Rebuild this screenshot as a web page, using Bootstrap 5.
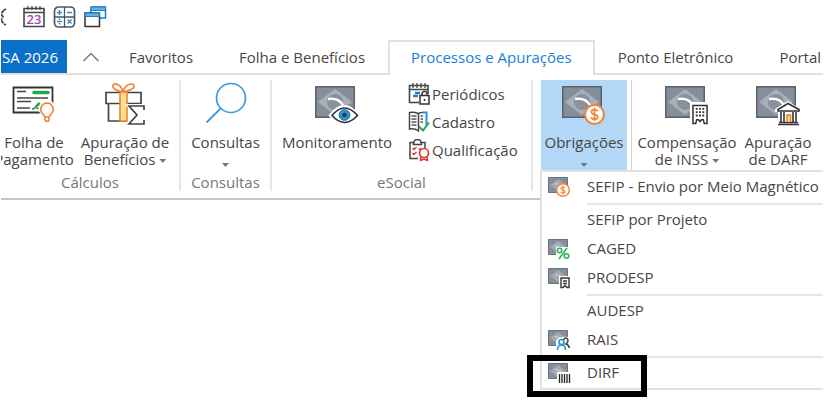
<!DOCTYPE html>
<html lang="pt-BR">
<head>
<meta charset="utf-8">
<meta name="viewport" content="width=device-width, initial-scale=1">
<title>Processos e Apurações</title>
<link href="https://cdn.jsdelivr.net/npm/bootstrap@5.3.0/dist/css/bootstrap.min.css" rel="stylesheet">
<style>
body{font-family:"Open Sans","Noto Sans",sans-serif;font-size:15px;line-height:17px;color:#484644;background:#fff}
.app-frame{margin:0 8px 0 1px;overflow:hidden;white-space:nowrap}
.app-frame button{color:inherit;font-size:15px;line-height:17px;border-radius:0;border:0;padding:0}
.quick-bar{height:40px;padding:6px 0 0;gap:8px}
.quick-bar svg,.tile svg,.mini svg,.menu-row svg{display:block;flex:none}
.ribbon-tabs{border-bottom:2px solid #e1e1e1;height:35px}
.ribbon-tabs > *{flex:none}
.ribbon-tabs .nav-link{border:2px solid transparent;border-bottom:0;border-radius:0;padding:7px 21px 0;height:35px;margin:0;color:#484644}
.ribbon-tabs .nav-link.active{color:#1a7fd6;border-color:#e1e1e1;background:#fff}
.app-frame .file-tab{width:66px;height:33px;background:#0a70c8;color:#fff;padding:2px 9px 0 0}
.app-frame .fold-btn{width:39px;padding:0 0 2px 15px}
.ribbon{height:125px;border-bottom:2px solid #c6c6c6;padding-top:5px}
.ribbon-group{height:111px;border-right:2px solid #e6e6e6}
.group-name{color:#777;margin-top:4px;text-align:center}
.tiles{height:90px}
.tile{height:90px;background:none;flex:none}
.tile .pic{height:54px;padding-top:2px}
.w-folha{width:66px}.w-benef{width:100px}.w-cons{width:89px}.w-mon{width:130px}.w-obr{width:86px}.w-comp{width:102px}.w-darf{width:80px}
.g-calc{width:180px}.g-cons{width:91px}.g-esoc{width:261px}
.tile.opened{background:#b3d7f7}
.arrow{width:7px;height:4px;background:#777;clip-path:polygon(0 0,100% 0,50% 100%);display:inline-block;vertical-align:middle}
.arrow.below{display:block;margin:12px auto 0}
.minis{padding-left:6px}
.app-frame .mini{height:28px;background:none;gap:2px}
.drop-panel{position:absolute;left:539px;right:0;top:95px;background:#fff;border:2px solid #e1e1e1;border-width:2px 0 2px 2px;padding-bottom:1px;z-index:2}
.app-frame .menu-row{height:29px;padding-left:6px;background:none;gap:15px}
.menu-row .slot{width:24px;flex:none}
.rule{height:4px;margin-left:45px;border-bottom:2px solid #e6e6e6}
.focus-box{position:absolute;left:-15px;top:-3px;width:120px;height:42px;border:6px solid #000;pointer-events:none}
</style>
<script src="https://cdn.jsdelivr.net/npm/bootstrap@5.3.0/dist/js/bootstrap.bundle.min.js"></script>
</head>
<body>
<svg width="0" height="0" class="position-absolute" aria-hidden="true">
<defs>
<symbol id="flag" viewBox="0 0 40 32"><path d="M.75.75h38.5v30.5H.75z" fill="#858e9b" stroke="#59616c" stroke-width="1.500"/><path d="M3 16 20 3l17 13-17 13z" fill="#a9afb8"/><circle cx="20" cy="16" r="8" fill="#89919d"/><path d="M13 13c6-1 12 1 15 6" fill="none" stroke="#fff" stroke-width="2.400"/></symbol>
<symbol id="flag-small" viewBox="0 0 20 16"><path d="M.5.5h19v15H.5z" fill="#858e9b" stroke="#6a727d"/><path d="m2 8 8-6 8 6-8 6z" fill="#a3aab4"/><path d="M7 7q4-1 6 2" fill="none" stroke="#d4d8dd" stroke-width="1.200"/></symbol>
<symbol id="coin" viewBox="0 0 20 20"><circle cx="10" cy="10" r="9" fill="#fff" stroke="#ef8535" stroke-width="2"/><path d="M13 7c-.5-1.300-1.600-1.700-3-1.700-1.700 0-3 .8-3 2.200 0 3.200 6 1.600 6 4.800 0 1.500-1.300 2.300-3 2.300-1.600 0-2.700-.6-3.200-2M10 3.500v13" fill="none" stroke="#ef8535" stroke-width="1.600"/></symbol>
<symbol id="block" viewBox="0 0 17 21"><path d="M1 1h15v19h-3l-1-4h-2l-1.500 2L7 16H5l-1 4H1z" fill="#fff" stroke="#333" stroke-width="1.600"/><path d="M4 4.500h10M4 8h10M4 11.500h10" stroke="#333" stroke-width="2" stroke-dasharray="2 1.500"/></symbol>
</defs>
</svg>
<div class="app-frame min-vh-100">
  <div class="quick-bar d-flex align-items-start">
    <button class="btn" aria-label="Configurações"><svg width="14" height="22" viewBox="0 0 14 22" fill="none" stroke="#444" stroke-width="1.800"><path d="M5 3 3 4M3 4 0 8M0 8l2 3-2 3M0 14l3 4M3 18l2 1" stroke-dasharray="4 1"/></svg></button>
    <button class="btn" aria-label="Calendário"><svg width="22" height="22" viewBox="0 0 22 22"><path d="M1 2.500h20v18H1zM1 6.500h20" fill="none" stroke="#444" stroke-width="1.600"/><path d="M5 0v4M9 0v4M13 0v4M17 0v4" stroke="#444" stroke-width="1.200"/><text x="11" y="18" text-anchor="middle" font-size="13" font-weight="600" fill="#a347ac">23</text></svg></button>
    <button class="btn" aria-label="Calculadora"><svg width="23" height="22" viewBox="0 0 23 22" fill="none"><rect x="1.500" y="1" width="20" height="20" rx="4" stroke="#555" stroke-width="1.700"/><path d="M11.500 1v20M1.500 11h20" stroke="#555" stroke-width="1.300"/><path d="M4 6.500h5M6.500 4v5M14 6.500h5M4 15.500h5M6.500 12.600v1.500M6.500 17v1.500M14.500 13.500l4 4M18.500 13.500l-4 4" stroke="#2090d8" stroke-width="1.500"/></svg></button>
    <button class="btn" aria-label="Janelas"><svg width="23" height="22" viewBox="0 0 23 22"><path d="M7 1h14.500v11H7z" fill="#fff" stroke="#177fc7" stroke-width="1.500"/><path d="M7 1h14.500v3.500H7z" fill="#64b1e4" stroke="#177fc7"/><path d="M1 7h14.500v13.500H1z" fill="#fff" stroke="#333" stroke-width="1.500"/><path d="M1 7h14.500v3.500H1z" fill="#64b1e4" stroke="#177fc7"/></svg></button>
  </div>
  <nav class="nav nav-tabs flex-nowrap ribbon-tabs" aria-label="Guias">
    <button class="btn file-tab d-flex justify-content-end align-items-center">SA 2026</button>
    <button class="btn fold-btn text-start" aria-label="Recolher"><svg width="18" height="10" viewBox="0 0 18 10"><path d="M1.500 9 9 1.500 16.500 9" fill="none" stroke="#777d88" stroke-width="1.500"/></svg></button>
    <a class="nav-link" href="#">Favoritos</a>
    <a class="nav-link" href="#">Folha e Benefícios</a>
    <a class="nav-link active" aria-current="page" href="#">Processos e Apurações</a>
    <a class="nav-link" href="#">Ponto Eletrônico</a>
    <a class="nav-link" href="#">Portal</a>
  </nav>
  <div class="position-relative">
  <div class="ribbon d-flex">
    <section class="ribbon-group g-calc flex-shrink-0">
      <div class="tiles d-flex gap-2">
        <button class="btn tile w-folha d-flex flex-column align-items-center"><span class="pic"><svg width="44" height="42" viewBox="0 0 44 42" fill="none"><path d="M1.500 5.500h39v25h-39z" stroke="#333" stroke-width="1.800"/><path d="M5 9.500h9M5 16h31M5 19.500h14M5 26h13" stroke="#444" stroke-width="1.500"/><path d="M22 10.500h14" stroke="#25a64a" stroke-width="3.500" stroke-linecap="round"/><path d="M20 27c3 0 4-2 5-4s4-2 3-.5-5 1-4 2.500 3 2 5 1.500" stroke="#25a64a" stroke-width="1.700"/><path d="M35 20a6.500 6.500 0 0 0-4 11.500l2 3V38q2 3 4 0v-3.500l2-3A6.500 6.500 0 0 0 35 20z" fill="#fff" stroke="#fff" stroke-width="4"/><path d="M35 21a6.300 6.300 0 0 0-4 11l2 3V38q2 3 4 0v-3l2-3a6.300 6.300 0 0 0-4-11zM33 35h4" stroke="#ee8434" stroke-width="1.600"/></svg></span><span>Folha de<br>Pagamento</span></button>
        <button class="btn tile w-benef d-flex flex-column align-items-center"><span class="pic"><svg width="42" height="44" viewBox="0 0 42 44" fill="none"><path d="M2 10.500h35v11H2zM4.500 21.500V39H22M34.500 21.500V23" stroke="#444" stroke-width="1.700"/><path d="M16 10h7v29h-7z" fill="#ffe18c" stroke="#ee8434" stroke-width="1.600"/><path d="M19 10C12 9 8 6 9 3.500S17 1 19 10C21 1 29 1 30 3.500S26 9 19 10z" fill="#fff" stroke="#ee8434" stroke-width="1.700"/><path d="M40 28v-4H25l8 9-8 9h15v-4" stroke="#fff" stroke-width="4"/><path d="M40 28v-4H25l8 9-8 9h15v-4" stroke="#444" stroke-width="1.700"/></svg></span><span>Apuração de<br>Benefícios <i class="arrow"></i></span></button>
      </div>
      <div class="group-name">Cálculos</div>
    </section>
    <section class="ribbon-group g-cons flex-shrink-0">
      <div class="tiles"><button class="btn tile w-cons d-flex flex-column align-items-center"><span class="pic"><svg width="42" height="42" viewBox="0 0 42 42"><circle cx="26" cy="16" r="14.500" fill="none" stroke="#3a9bdc" stroke-width="1.700"/><path d="M15.500 26.500 1.500 40.500" stroke="#3a9bdc" stroke-width="1.800"/></svg></span><span>Consultas</span><i class="arrow below"></i></button></div>
      <div class="group-name">Consultas</div>
    </section>
    <section class="ribbon-group g-esoc flex-shrink-0">
      <div class="tiles d-flex">
        <button class="btn tile w-mon d-flex flex-column align-items-center"><span class="pic"><svg width="44" height="44" viewBox="0 0 44 44" fill="none"><use href="#flag" y="4" width="40" height="32"/><path d="M16 33.500q13-17 27 0-14 16-27 0z" fill="#fff" stroke="#fff" stroke-width="4"/><path d="M17 33.500q12.500-15 25.500 0-13 14-25.500 0z" stroke="#333" stroke-width="1.700"/><circle cx="29.500" cy="33" r="5.300" fill="#2794d8" stroke="#176ca8"/><circle cx="29.500" cy="33" r="2.300" fill="#333"/></svg></span><span>Monitoramento</span></button>
        <div class="minis d-flex flex-column">
          <button class="btn mini d-flex align-items-center"><svg width="22" height="22" viewBox="0 0 22 22" fill="none"><path d="M11 19.500H1.500v-17H20V11M1.500 6.500H20" stroke="#444" stroke-width="1.600"/><path d="M5 0v5M9 0v5M13 0v5M17 0v5" stroke="#444" stroke-width="1.300"/><path d="M5 13h5M7 10h5" stroke="#207fd0" stroke-width="2.500"/><path d="M12 12.500h9V21h-9zM14 12.500V10q2.500-3.500 5 0v2.500M16.500 16v2" fill="#fff" stroke="#333" stroke-width="1.500"/></svg>Periódicos</button>
          <button class="btn mini d-flex align-items-center"><svg width="22" height="22" viewBox="0 0 22 22" fill="none"><path d="M10 2.500Q6 .5 1.500 1.500V18q5-1 9 2V2.500q3-1.500 5-1" stroke="#444" stroke-width="1.500"/><path d="M3.500 5h5M3.500 8h5M3.500 11h5M3.500 14h5M12.500 5H15M12.500 8H15M12.500 11H15" stroke="#555" stroke-width="1.300"/><path d="M15 1.500h3.500V14" stroke="#2794d8" stroke-width="2"/><path d="m11 15.500 4 4 6-8" stroke="#25a64a" stroke-width="2"/></svg>Cadastro</button>
          <button class="btn mini d-flex align-items-center"><svg width="22" height="22" viewBox="0 0 22 22" fill="none"><path d="M10 19.500H2V3.500h4q0-3 3.500-3t3.500 3h4V9M5.500 3.500v2h8v-2" stroke="#444" stroke-width="1.500"/><path d="m4.500 9 1.500 1.500L8.500 8m-4 6L6 15.500 8.500 13M10.500 10h3" stroke="#df3838" stroke-width="1.400"/><circle cx="16" cy="14" r="4.500" fill="#fff" stroke="#df3838" stroke-width="1.700"/><path d="m13 17-.5 4.500L16 20l3.500 1.500L19 17" stroke="#df3838" stroke-width="1.600"/></svg>Qualificação</button>
        </div>
      </div>
      <div class="group-name">eSocial</div>
    </section>
    <section class="d-flex ps-2">
      <button class="btn tile opened w-obr d-flex flex-column align-items-center" aria-expanded="true"><span class="pic"><svg width="44" height="44" viewBox="0 0 44 44"><use href="#flag" y="4" width="40" height="32"/><use href="#coin" x="22" y="22" width="21" height="21"/></svg></span><span>Obrigações</span><i class="arrow below"></i></button>
      <div class="vr ms-1 opacity-10"></div>
      <button class="btn tile w-comp ms-1 d-flex flex-column align-items-center"><span class="pic"><svg width="44" height="44" viewBox="0 0 44 44"><use href="#flag" y="4" width="40" height="32"/><path d="M25 20h20v23H25z" fill="#fff"/><use href="#block" x="27" y="22" width="16" height="21"/></svg></span><span>Compensação<br>de INSS <i class="arrow"></i></span></button>
      <button class="btn tile w-darf d-flex flex-column align-items-center"><span class="pic"><svg width="44" height="44" viewBox="0 0 44 44"><use href="#flag" y="4" width="40" height="32"/><path d="M32 19 19 27v3h3v13h22V27z" fill="#fff"/><path d="m32 21.500-10 6V29h21v-1.500zM23 40.500h19M22 42.500h21M25 30v10M28 30v10M37 30v10M40 30v10" fill="#fff" stroke="#333" stroke-width="1.600"/><path d="M31 40v-7h3.500v7" fill="#ffe18c" stroke="#ee7a20" stroke-width="1.500"/></svg></span><span>Apuração<br>de DARF</span></button>
    </section>
  </div>
  <div class="drop-panel" role="menu" aria-label="Obrigações">
    <button class="btn menu-row w-100 d-flex align-items-center" role="menuitem"><span class="slot"><svg width="23" height="22" viewBox="0 0 23 22"><use href="#flag-small" y="1" width="20" height="16"/><use href="#coin" x="8" y="7" width="14" height="14"/></svg></span>SEFIP - Envio por Meio Magnético</button>
    <div class="rule"></div>
    <button class="btn menu-row w-100 d-flex align-items-center" role="menuitem"><span class="slot"></span>SEFIP por Projeto</button>
    <button class="btn menu-row w-100 d-flex align-items-center" role="menuitem"><span class="slot"><svg width="23" height="22" viewBox="0 0 23 22"><use href="#flag-small" y="1" width="20" height="16"/><path d="M8 9h14v12H8z" fill="#fff"/><g fill="none" stroke="#25b457" stroke-width="1.600"><circle cx="11.500" cy="12.500" r="2.200"/><circle cx="18.500" cy="18" r="2.200"/><path d="m19 10-8 11"/></g></svg></span>CAGED</button>
    <button class="btn menu-row w-100 d-flex align-items-center" role="menuitem"><span class="slot"><svg width="23" height="22" viewBox="0 0 23 22"><use href="#flag-small" y="1" width="20" height="16"/><path d="M11 9h12v12H11z" fill="#fff"/><path d="M13 11h8v9.500h-2l-2-2-2 2h-2zM15 14h4M15 16.500h4" fill="#fff" stroke="#333" stroke-width="1.400"/></svg></span>PRODESP</button>
    <div class="rule"></div>
    <button class="btn menu-row w-100 d-flex align-items-center" role="menuitem"><span class="slot"></span>AUDESP</button>
    <button class="btn menu-row w-100 d-flex align-items-center" role="menuitem"><span class="slot"><svg width="23" height="22" viewBox="0 0 23 22"><use href="#flag-small" y="1" width="20" height="16"/><path d="M8 12q3-5 13-4v13H8z" fill="#fff"/><g fill="none" stroke-width="1.600"><path d="M15 11q3-4 5 0 0 3-2 4 3 1 3.500 4" stroke="#444"/><circle cx="13.500" cy="13" r="2.500" stroke="#2794d8"/><path d="M9.500 21q0-5 4-5t4 5" stroke="#2794d8"/></g></svg></span>RAIS</button>
    <div class="rule"></div>
    <div class="position-relative">
      <button class="btn menu-row w-100 d-flex align-items-center" role="menuitem"><span class="slot"><svg width="23" height="22" viewBox="0 0 23 22"><use href="#flag-small" y="1" width="20" height="16"/><path d="M9 10h14v12H9z" fill="#fff"/><path d="M11.500 12v9M14 12v9M16.500 12v9M19 12v9M21.500 12v9" stroke="#222" stroke-width="1.300"/></svg></span>DIRF</button>
      <div class="focus-box"></div>
    </div>
  </div>
  </div>
</div>
</body>
</html>
